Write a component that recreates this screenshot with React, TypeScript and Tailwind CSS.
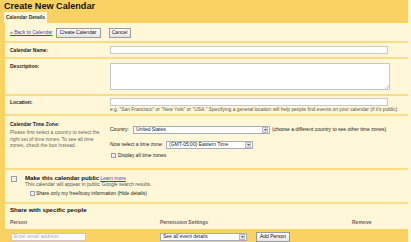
import React from 'react';

const Select: React.FC<{ value: string; width: string }> = ({ value, width }) => (
  <div className={`flex h-[8px] items-center justify-between border border-[#a5acb5] bg-white ${width}`}>
    <span className="pl-[2px] text-[5px] leading-none text-[#222]">{value}</span>
    <span className="mr-[1px] flex h-[6px] w-[6px] items-center justify-center border border-[#b8bec6] bg-[#e3e6ea]">
      <svg width="3" height="2" viewBox="0 0 4 2">
        <path d="M0 0h4L2 2z" fill="#333" />
      </svg>
    </span>
  </div>
);

const Checkbox: React.FC<{ size?: string }> = ({ size = 'h-[5px] w-[5px]' }) => (
  <span className={`inline-block shrink-0 border border-[#9aa0a8] bg-[#f2f2f2] ${size}`} />
);

const Button: React.FC<{ label: string; width: string }> = ({ label, width }) => (
  <span
    className={`flex h-[10px] items-center justify-center border border-[#9a9a9a] bg-gradient-to-b from-white to-[#e4e4e4] text-[5px] leading-none text-[#111] ${width}`}
  >
    {label}
  </span>
);

const Sep = () => <div className="h-[2px] bg-[#fcdc86]" />;

export default function App() {
  return (
    <div
      className="h-[242px] w-[411px] overflow-hidden bg-[#fff7d7] text-[#222]"
      style={{ fontFamily: '"Liberation Sans", Arial, sans-serif' }}
    >
      {/* header */}
      <div className="mr-[3px] bg-[#fad163] pl-[4px] pt-[1px]">
        <div className="h-[11px] text-[9.1px] font-bold leading-[11px] text-[#111]">Create New Calendar</div>
        <div className="flex">
          <div className="flex h-[11px] w-[43px] items-center justify-center bg-[#fff7d7] text-[5px] font-bold leading-none text-[#333]">
            Calendar Details
          </div>
        </div>
      </div>

      <div className="mr-[3px] border-l-[5px] border-[#fad163] bg-[#fff7d7]">
        {/* back row */}
        <div className="flex h-[18px] items-center gap-[3px] pl-[5px] pt-[1px]">
          <span className="text-[5px] leading-none text-[#2a4fc7] underline">« Back to Calendar</span>
          <Button label="Create Calendar" width="w-[45px]" />
          <span className="w-[2px]" />
          <Button label="Cancel" width="w-[22px]" />
        </div>
        <Sep />

        {/* name */}
        <div className="flex h-[14px] items-center pl-[5px]">
          <span className="w-[100px] text-[5px] font-bold leading-none">Calendar Name:</span>
          <div className="h-[8px] w-[278px] border border-[#c9c9c9] bg-white" />
        </div>
        <Sep />

        {/* description */}
        <div className="flex h-[35px] pl-[5px] pt-[4px]">
          <span className="w-[100px] pt-[1px] text-[5px] font-bold leading-none">Description:</span>
          <div className="relative h-[27px] w-[280px] border border-[#c9c9c9] bg-white">
            <svg className="absolute bottom-0 right-0" width="4" height="4" viewBox="0 0 4 4">
              <path d="M4 0L0 4M4 2L2 4" stroke="#aaa" strokeWidth="0.6" />
            </svg>
          </div>
        </div>
        <Sep />

        {/* location */}
        <div className="flex h-[18px] pl-[5px] pt-[2px]">
          <span className="w-[100px] pt-[2px] text-[5px] font-bold leading-none">Location:</span>
          <div className="flex flex-col gap-[2px]">
            <div className="h-[8px] w-[278px] border border-[#c9c9c9] bg-white" />
            <span className="whitespace-nowrap text-[4.9px] leading-none text-[#555]">
              e.g. "San Francisco" or "New York" or "USA." Specifying a general location will help people find events on your calendar (if it's public)
            </span>
          </div>
        </div>
        <Sep />

        {/* time zone */}
        <div className="flex h-[52px] pl-[5px] pt-[6px]">
          <div className="w-[100px]">
            <div className="text-[5px] font-bold leading-none">Calendar Time Zone:</div>
            <div className="mt-[2px] w-[92px] text-[5px] leading-[6.5px] text-[#666]">
              Please first select a country to select the right set of time zones. To see all time zones, check the box instead.
            </div>
          </div>
          <div className="flex flex-col pt-[3px]">
            <div className="flex h-[9px] items-center">
              <span className="w-[23px] text-[5px] leading-none">Country:</span>
              <Select value="United States" width="w-[137px]" />
              <span className="ml-[2px] whitespace-nowrap text-[5px] leading-none">
                (choose a different country to see other time zones)
              </span>
            </div>
            <div className="mt-[6px] flex h-[9px] items-center">
              <span className="w-[56px] text-[5px] leading-none">Now select a time zone:</span>
              <Select value="(GMT-05:00) Eastern Time" width="w-[87px]" />
            </div>
            <div className="mt-[4px] flex items-center gap-[2px] pl-[1px]">
              <Checkbox />
              <span className="text-[5px] leading-none">Display all time zones</span>
            </div>
          </div>
        </div>
        <Sep />

        {/* public */}
        <div className="h-[32px] pl-[6px] pt-[5px]">
          <div className="flex items-start">
            <Checkbox size="h-[6px] w-[6px] mt-[1px]" />
            <div className="ml-[8px]">
              <div className="flex items-baseline gap-[1px]">
                <span className="text-[6.1px] font-bold leading-none text-[#111]">Make this calendar public</span>
                <span className="text-[5px] leading-none text-[#2a4fc7] underline">Learn more</span>
              </div>
              <div className="mt-[1px] text-[5px] leading-none text-[#555]">
                This calendar will appear in public Google search results.
              </div>
            </div>
          </div>
          <div className="ml-[19px] mt-[4px] flex items-center gap-[1px]">
            <Checkbox />
            <span className="text-[5px] leading-none">Share only my free/busy information (Hide details)</span>
          </div>
        </div>
        <Sep />

        {/* share */}
        <div className="flex h-[12px] items-center pl-[5px]">
          <span className="text-[6.1px] font-bold leading-none text-[#111]">Share with specific people</span>
        </div>
        <div className="flex h-[13px] items-center pl-[5px] text-[5px] font-bold leading-none text-[#666]">
          <span className="w-[150px]">Person</span>
          <span className="w-[192px]">Permission Settings</span>
          <span>Remove</span>
        </div>
        <div className="-ml-[5px] flex h-[15px] items-center bg-[#fad163] pl-[11px]">
          <div className="flex h-[8px] w-[75px] items-center border border-[#c9c9c9] bg-white pl-[2px] text-[5px] leading-none text-[#aaa]">
            Enter email address
          </div>
          <span className="w-[74px]" />
          <Select value="See all event details" width="w-[87px]" />
          <span className="w-[9px]" />
          <Button label="Add Person" width="w-[34px] h-[9px]" />
        </div>
      </div>
    </div>
  );
}
